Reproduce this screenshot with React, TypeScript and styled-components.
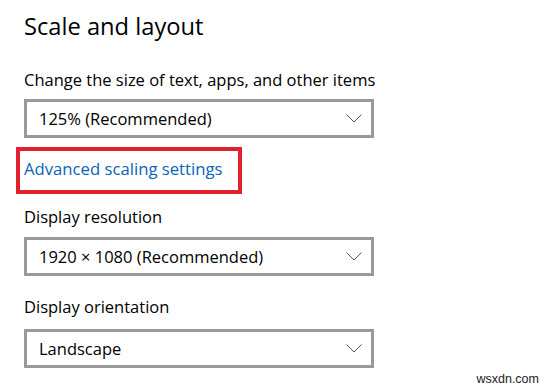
import React from "react";
import styled, { createGlobalStyle } from "styled-components";

const Global = createGlobalStyle`
  html, body { margin: 0; padding: 0; background: #ffffff; }
  body { font-family: "Open Sans", "Noto Sans", sans-serif; color: #000; }
`;

const Page = styled.main`
  position: relative;
  width: 551px;
  height: 389px;
  box-sizing: border-box;
  padding: 10px 0 0 24px;
  overflow: hidden;
  display: flex;
  flex-direction: column;
  align-items: flex-start;
`;

const Heading = styled.h1`
  margin: 0;
  font-size: 23.7px;
  font-weight: 400;
  line-height: 32px;
  color: #000;
`;

const Label = styled.div<{ $gap: number }>`
  margin-top: ${(p) => p.$gap}px;
  font-size: 16.5px;
  line-height: 20px;
  color: #000;
`;

const Select = styled.div<{ $gap: number }>`
  margin-top: ${(p) => p.$gap}px;
  width: 350px;
  height: 39px;
  box-sizing: border-box;
  border: 3px solid #999999;
  background: #fff;
  display: flex;
  align-items: center;
  justify-content: space-between;
  padding: 0 9px 0 12px;
  font-size: 16.5px;
  color: #000;
`;

const Highlight = styled.div`
  margin: 9px 0 0 -8px;
  width: 226px;
  height: 47px;
  box-sizing: border-box;
  border: 4px solid #e3202e;
  padding: 7px 0 0 4px;
`;

const Link = styled.a`
  font-size: 16.7px;
  line-height: 20px;
  color: #0a64b8;
  text-decoration: none;
  cursor: pointer;
`;

const Watermark = styled.div`
  position: absolute;
  right: 12px;
  bottom: 3px;
  font-family: "Liberation Sans", Arial, sans-serif;
  font-size: 12.5px;
  color: #222;
`;

const Chevron = () => (
  <svg width="16" height="9" viewBox="0 0 16 9" fill="none">
    <polyline points="0.5,0.5 8,8 15.5,0.5" stroke="#555" strokeWidth="1" />
  </svg>
);

export default function App() {
  return (
    <>
      <Global />
      <Page>
        <Heading>Scale and layout</Heading>
        <Label $gap={28}>Change the size of text, apps, and other items</Label>
        <Select $gap={9}>
          <span>125% (Recommended)</span>
          <Chevron />
        </Select>
        <Highlight>
          <Link>Advanced scaling settings</Link>
        </Highlight>
        <Label $gap={13}>Display resolution</Label>
        <Select $gap={10}>
          <span>1920 × 1080 (Recommended)</span>
          <Chevron />
        </Select>
        <Label $gap={21}>Display orientation</Label>
        <Select $gap={12}>
          <span>Landscape</span>
          <Chevron />
        </Select>
        <Watermark>wsxdn.com</Watermark>
      </Page>
    </>
  );
}
